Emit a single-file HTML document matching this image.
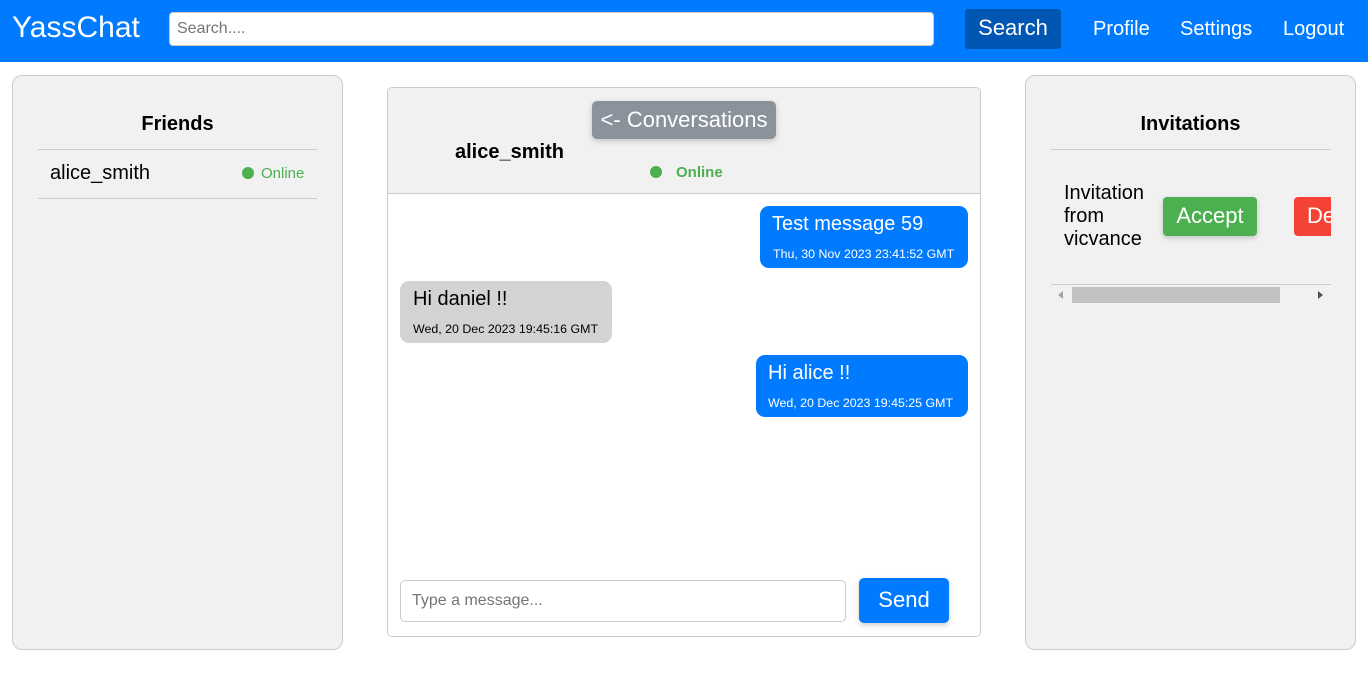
<!DOCTYPE html>
<html><head><style>
*{box-sizing:border-box;margin:0;padding:0}
body{width:1368px;height:684px;background:#fff;font-family:"Liberation Sans",Arial,sans-serif;position:relative;overflow:hidden}
.a{position:absolute}
.nav{left:0;top:0;width:1368px;height:62px;background:#007bff}
.panel{background:#f1f1f1;border:1px solid #ccc;border-radius:10px}
.bub{border-radius:9px;color:#fff}
.dot{width:12px;height:12px;border-radius:50%;background:#4caf50}
</style></head><body>
<div class="a nav"></div>
<div class="a" style="left:12px;top:11px;color:#fff;font-size:30px">YassChat</div>
<div class="a" style="left:169px;top:12px;width:765px;height:34px;background:#fff;border-radius:4px;border:1px solid #ccc"></div>
<div class="a" style="left:177px;top:20px;color:#757575;font-size:16px">Search....</div>
<div class="a" style="left:965px;top:9px;width:96px;height:40px;background:#0056b3;border-radius:3px;color:#fff;font-size:22px;text-align:center;line-height:38px">Search</div>
<div class="a" style="left:1093px;top:18px;color:#fff;font-size:20px">Profile</div>
<div class="a" style="left:1180px;top:18px;color:#fff;font-size:20px">Settings</div>
<div class="a" style="left:1283px;top:18px;color:#fff;font-size:20px">Logout</div>

<div class="a panel" style="left:12px;top:75px;width:331px;height:575px"></div>
<div class="a" style="left:12px;top:113px;width:331px;text-align:center;font-weight:bold;font-size:20px">Friends</div>
<div class="a" style="left:38px;top:149px;width:279px;height:1px;background:#ccc"></div>
<div class="a" style="left:50px;top:162px;font-size:20px">alice_smith</div>
<div class="a dot" style="left:242px;top:167px"></div>
<div class="a" style="left:261px;top:165px;font-size:15px;color:#4caf50">Online</div>
<div class="a" style="left:38px;top:198px;width:279px;height:1px;background:#ccc"></div>

<div class="a" style="left:387px;top:87px;width:594px;height:550px;border:1px solid #ccc;border-radius:5px;background:#fff"></div>
<div class="a" style="left:388px;top:88px;width:592px;height:106px;background:#f1f1f1;border-bottom:1px solid #ccc;border-radius:5px 5px 0 0"></div>
<div class="a" style="left:592px;top:101px;width:184px;height:38px;background:#8a929c;border-radius:5px;color:#fff;font-size:22px;text-align:center;line-height:37px;box-shadow:0 2px 6px rgba(0,0,0,.2);white-space:nowrap">&lt;- Conversations</div>
<div class="a" style="left:455px;top:141px;font-weight:bold;font-size:20px">alice_smith</div>
<div class="a dot" style="left:650px;top:166px"></div>
<div class="a" style="left:676px;top:164px;font-weight:bold;font-size:15px;color:#4caf50">Online</div>

<div class="a bub" style="left:760px;top:206px;width:208px;height:62px;background:#007bff"></div>
<div class="a" style="left:772px;top:213px;color:#fff;font-size:20px">Test message 59</div>
<div class="a" style="left:773px;top:247px;color:#fff;font-size:12.4px">Thu, 30 Nov 2023 23:41:52 GMT</div>
<div class="a bub" style="left:400px;top:281px;width:212px;height:62px;background:#d3d3d3"></div>
<div class="a" style="left:413px;top:288px;font-size:20px">Hi daniel !!</div>
<div class="a" style="left:413px;top:322px;font-size:12.4px">Wed, 20 Dec 2023 19:45:16 GMT</div>
<div class="a bub" style="left:756px;top:355px;width:212px;height:62px;background:#007bff"></div>
<div class="a" style="left:768px;top:362px;color:#fff;font-size:20px">Hi alice !!</div>
<div class="a" style="left:768px;top:396px;color:#fff;font-size:12.4px">Wed, 20 Dec 2023 19:45:25 GMT</div>

<div class="a" style="left:400px;top:580px;width:446px;height:42px;border:1px solid #ccc;border-radius:5px"></div>
<div class="a" style="left:412px;top:592px;color:#757575;font-size:16px">Type a message...</div>
<div class="a" style="left:859px;top:578px;width:90px;height:45px;background:#007bff;border-radius:5px;color:#fff;font-size:22px;text-align:center;line-height:44px;box-shadow:0 2px 6px rgba(0,0,0,.2)">Send</div>

<div class="a panel" style="left:1025px;top:75px;width:331px;height:575px"></div>
<div class="a" style="left:1025px;top:113px;width:331px;text-align:center;font-weight:bold;font-size:20px">Invitations</div>
<div class="a" style="left:1051px;top:149px;width:280px;height:1px;background:#ccc"></div>
<div class="a" style="left:1064px;top:182px;font-size:20px;line-height:23px">Invitation<br>from<br>vicvance</div>
<div class="a" style="left:1163px;top:197px;width:94px;height:39px;background:#4caf50;border-radius:4px;color:#fff;font-size:22px;text-align:center;line-height:38px;box-shadow:0 2px 6px rgba(0,0,0,.2)">Accept</div>
<div class="a" style="left:1294px;top:197px;width:37px;height:39px;background:#f44336;border-radius:4px 0 0 4px;color:#fff;font-size:22px;line-height:38px;padding-left:13px;overflow:hidden;white-space:nowrap">De</div>
<div class="a" style="left:1051px;top:284px;width:280px;height:1px;background:#ccc"></div>
<div class="a" style="left:1051px;top:285px;width:280px;height:20px;background:#f1f1f1"></div>
<div class="a" style="left:1072px;top:287px;width:208px;height:16px;background:#c1c1c1"></div>
<div class="a" style="left:1058px;top:291px;width:0;height:0;border-top:4px solid transparent;border-bottom:4px solid transparent;border-right:5px solid #a3a3a3"></div>
<div class="a" style="left:1318px;top:291px;width:0;height:0;border-top:4px solid transparent;border-bottom:4px solid transparent;border-left:5px solid #505050"></div>
</body></html>
